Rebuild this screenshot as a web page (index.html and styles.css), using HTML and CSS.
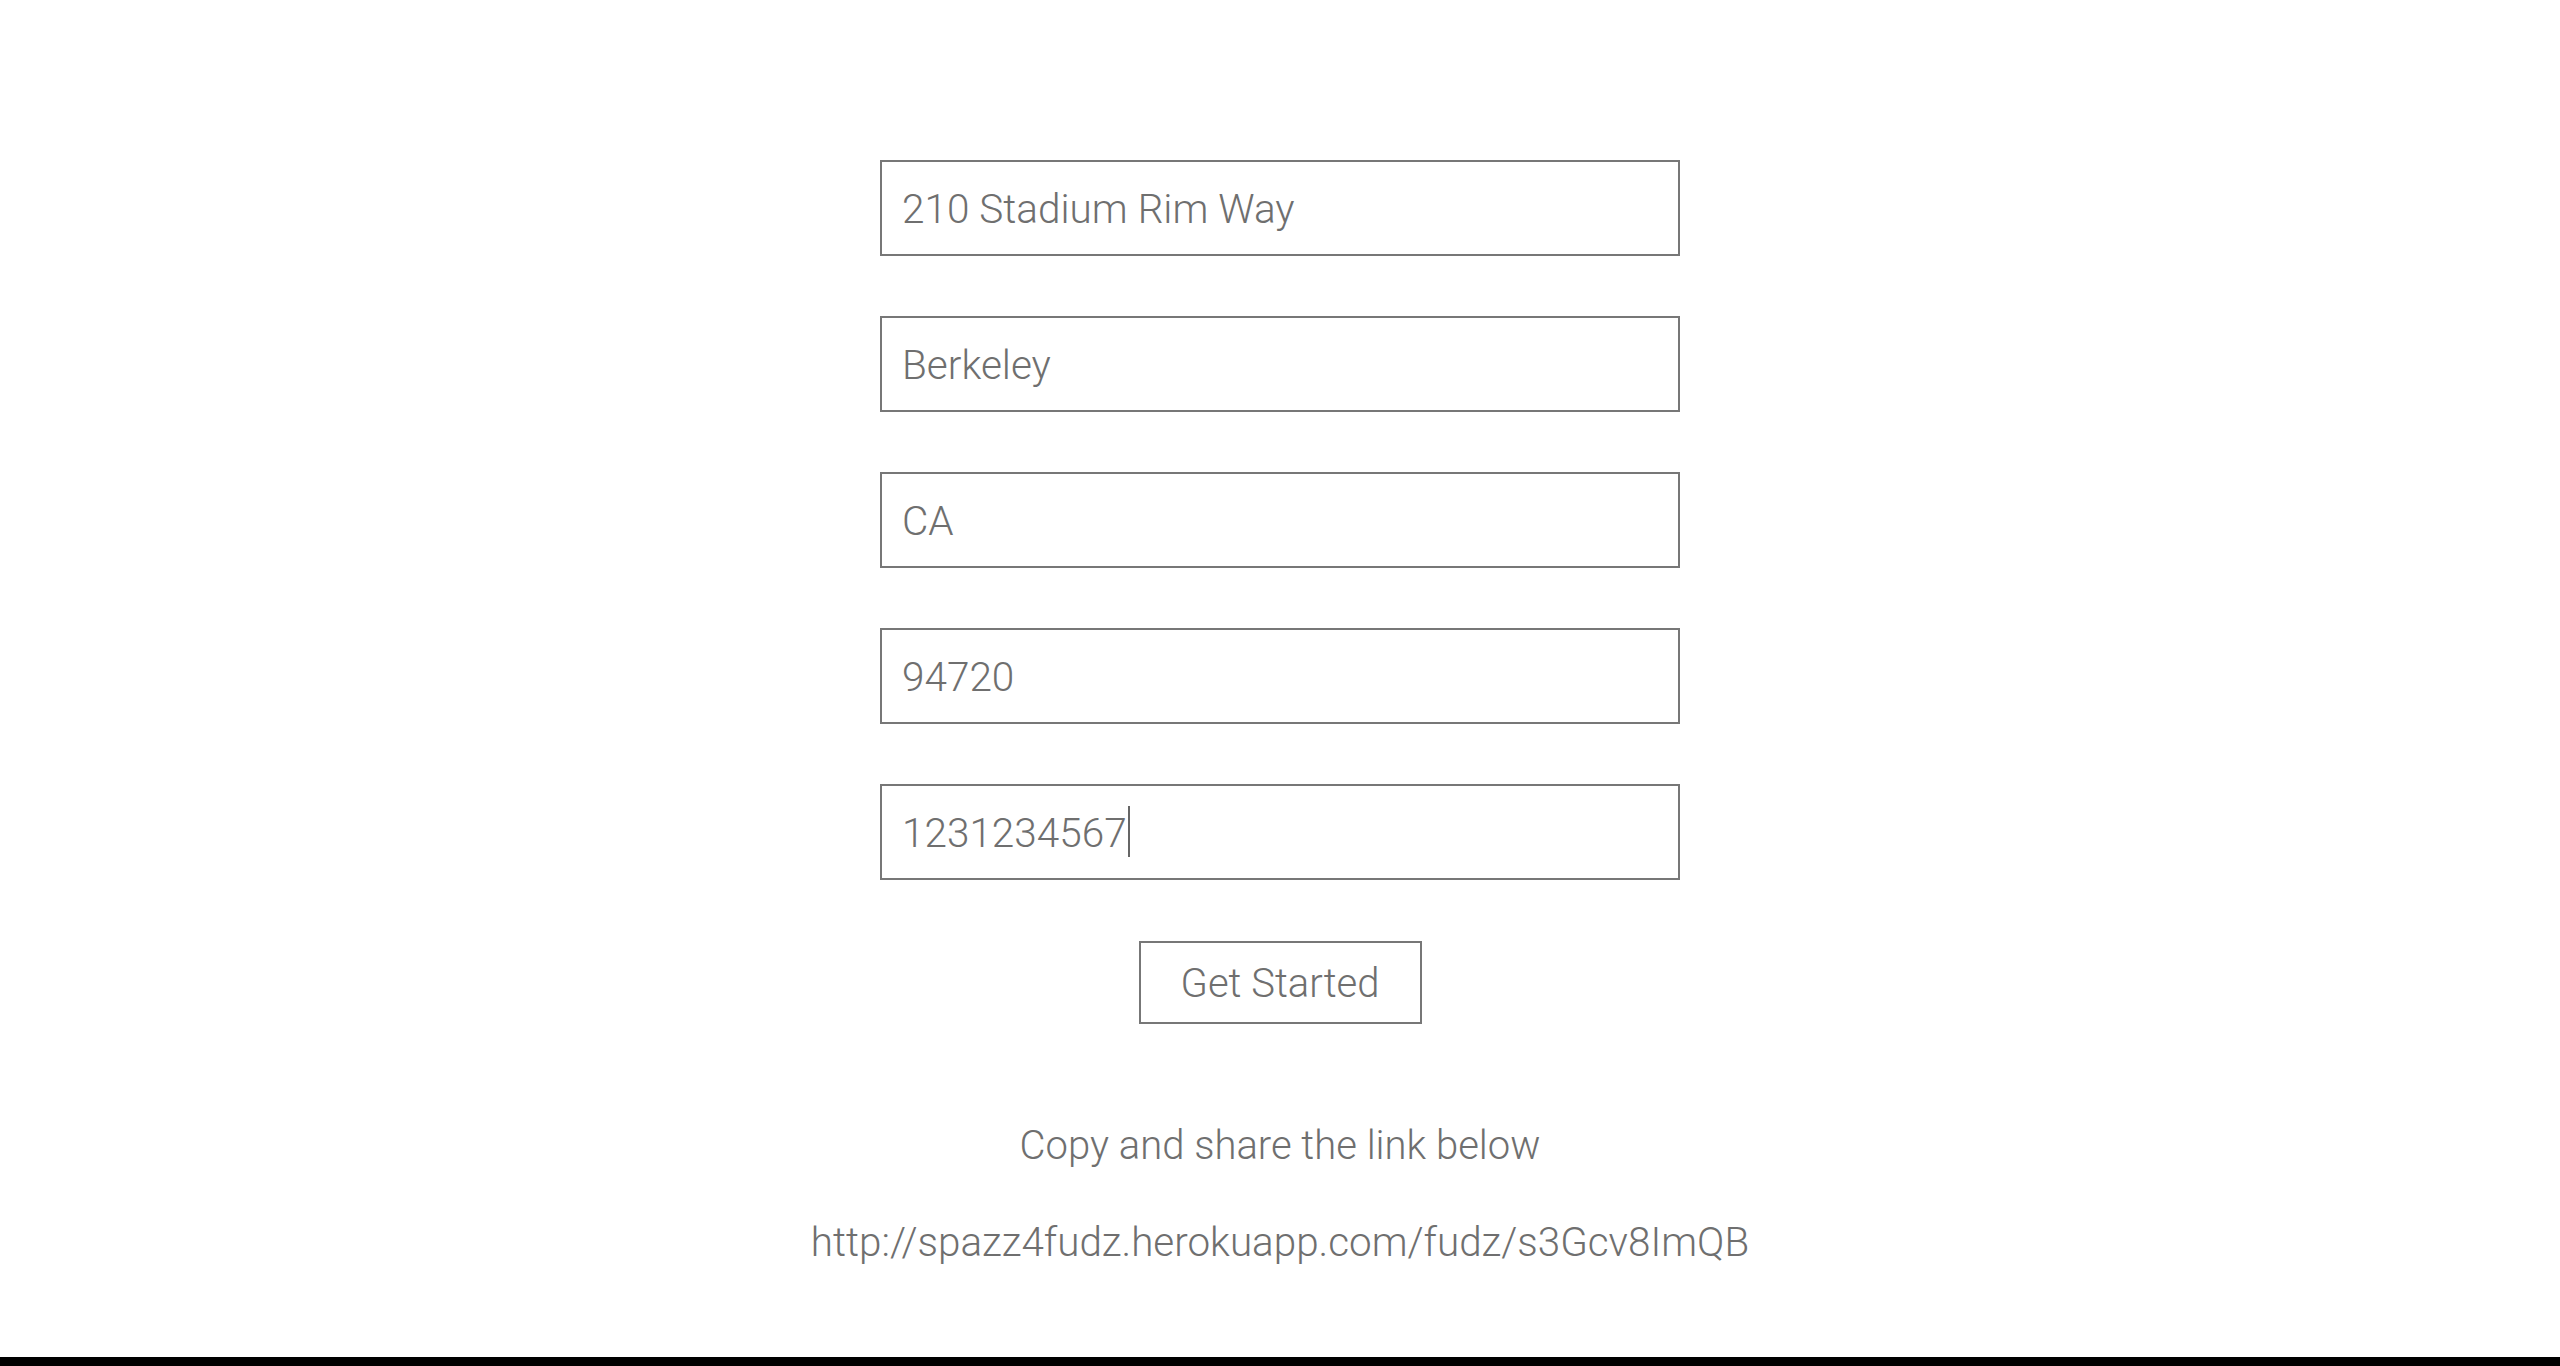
FILE: index.html
```html
<!DOCTYPE html>
<html lang="en">
<head>
<meta charset="utf-8">
<title>Spazz4Fudz</title>
<link rel="stylesheet" href="styles.css">
</head>
<body>
<main class="page">
  <form class="form">
    <input class="field" type="text" value="210 Stadium Rim Way">
    <input class="field" type="text" value="Berkeley">
    <input class="field" type="text" value="CA">
    <input class="field" type="text" value="94720">
    <div class="field-wrap">
      <input class="field" type="text" value="1231234567">
      <span class="caret"></span>
    </div>
    <button class="btn" type="button">Get Started</button>
  </form>
  <p class="share">Copy and share the link below</p>
  <p class="link">http://spazz4fudz.herokuapp.com/fudz/s3Gcv8ImQB</p>
</main>
<div class="edge"></div>
</body>
</html>
```

FILE: styles.css
```css
html, body {
  margin: 0;
  padding: 0;
  background: #fff;
}
body {
  min-height: 100vh;
  display: flex;
  flex-direction: column;
  font-family: Roboto, "Liberation Sans", sans-serif;
  font-weight: 300;
  color: #6f6f6f;
}
.page {
  flex: 1;
  display: flex;
  flex-direction: column;
  align-items: center;
  padding-top: 160px;
}
.form {
  display: flex;
  flex-direction: column;
  align-items: center;
  gap: 60px;
}
.field-wrap {
  position: relative;
}
.field {
  box-sizing: border-box;
  width: 800px;
  height: 96px;
  margin: 0;
  padding: 2px 20px 0;
  border: 2px solid #777;
  border-radius: 0;
  background: #fff;
  font-family: inherit;
  font-weight: 300;
  font-size: 40.5px;
  color: #6f6f6f;
  outline: none;
  display: block;
}
.caret {
  position: absolute;
  left: 248px;
  top: 22px;
  width: 2px;
  height: 51px;
  background: #666;
}
.btn {
  box-sizing: border-box;
  width: 283px;
  height: 83px;
  margin-top: 1px;
  padding: 2px 0 0;
  border: 2px solid #777;
  border-radius: 0;
  background: #fff;
  font-family: inherit;
  font-weight: 300;
  font-size: 40px;
  color: #6f6f6f;
}
.share {
  margin: 94px 0 0;
  font-size: 40px;
  line-height: 56px;
}
.link {
  margin: 41px 0 0;
  font-size: 40.4px;
  line-height: 56px;
}
.edge {
  height: 9px;
  background: #000;
}
```
